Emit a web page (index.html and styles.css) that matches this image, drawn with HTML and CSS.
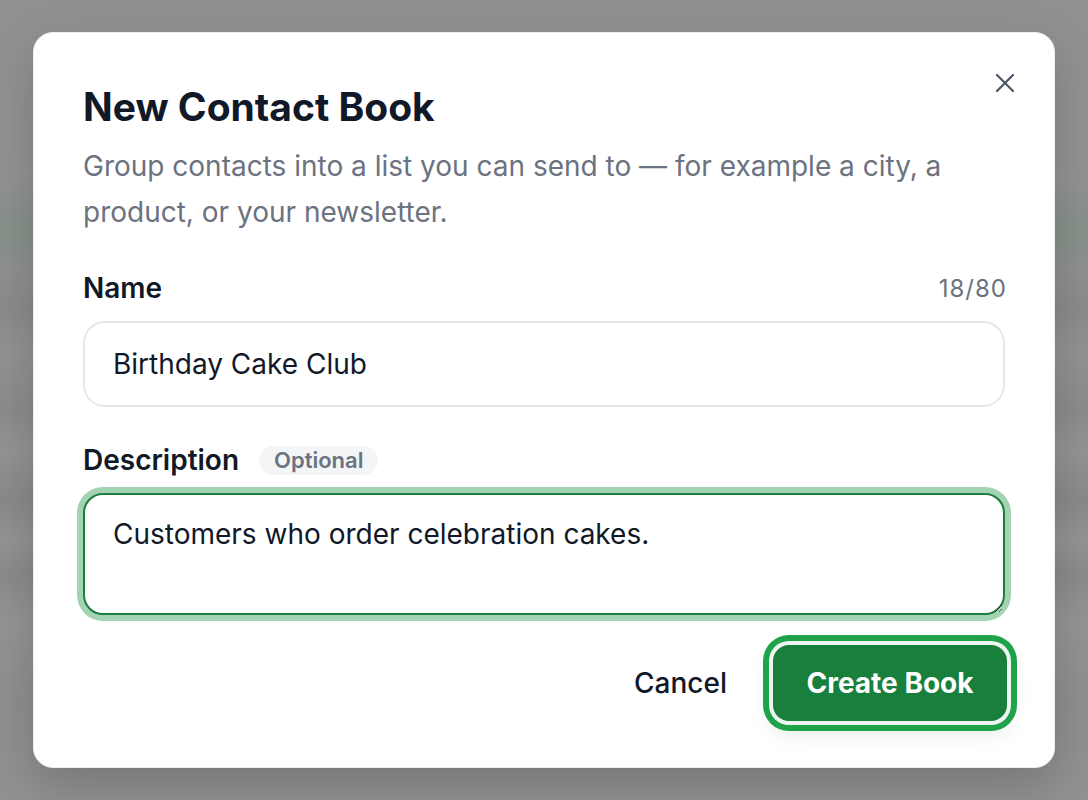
FILE: index.html
```html
<!DOCTYPE html>
<html lang="en">
<head>
<meta charset="utf-8">
<title>New Contact Book</title>
<link rel="stylesheet" href="styles.css">
</head>
<body>
<div class="backdrop">
  <div class="dialog">
    <button class="close" aria-label="Close">
      <svg width="22" height="22" viewBox="0 0 22 22" fill="none" stroke="currentColor" stroke-width="2.2" stroke-linecap="round"><path d="M3 3L19 19M19 3L3 19"/></svg>
    </button>
    <h1 class="title">New Contact Book</h1>
    <p class="desc">Group contacts into a list you can send to — for example a city, a product, or your newsletter.</p>

    <div class="field">
      <div class="label-row">
        <label class="label">Name</label>
        <span class="counter">18/80</span>
      </div>
      <input class="input" type="text" value="Birthday Cake Club">
    </div>

    <div class="field">
      <div class="label-row">
        <label class="label">Description</label>
        <span class="pill">Optional</span>
      </div>
      <textarea class="textarea">Customers who order celebration cakes.</textarea>
    </div>

    <div class="actions">
      <button class="btn-cancel">Cancel</button>
      <button class="btn-primary">Create Book</button>
    </div>
  </div>
</div>
</body>
</html>
```

FILE: styles.css
```css
* { box-sizing: border-box; }
html, body { margin: 0; padding: 0; }
body {
  width: 1088px;
  height: 800px;
  overflow: hidden;
  font-family: Inter, "Noto Sans", sans-serif;
  background:
    linear-gradient(180deg,
      #8f908f 0px, #929392 180px, #86918a 230px, #8f918f 270px,
      #8a8b8a 310px, #929392 350px, #8b8c8b 410px, #939493 450px,
      #898a89 500px, #939493 540px, #8a8b8a 575px, #949594 620px,
      #8e8f8e 700px, #919291 800px);
}
.backdrop {
  width: 1088px;
  height: 800px;
  display: flex;
  align-items: center;
  justify-content: center;
}
.dialog {
  position: relative;
  width: 1022px;
  height: 736px;
  background: #fff;
  border-radius: 20px;
  border: 1px solid #eceeee;
  box-shadow: 0 20px 50px rgba(0,0,0,0.18);
  padding: 51px 49px 0 49px;
  display: flex;
  flex-direction: column;
}
.close {
  position: absolute;
  top: 39px;
  right: 38px;
  width: 22px;
  height: 22px;
  padding: 0;
  border: 0;
  background: none;
  color: #4b5563;
  display: flex;
}
.title {
  margin: 0;
  font-size: 39px;
  line-height: 46px;
  font-weight: 700;
  color: #111827;
}
.desc {
  margin: 13px 0 0 0;
  font-size: 28px;
  line-height: 46px;
  color: #6b7280;
}
.field { display: flex; flex-direction: column; }
.label-row {
  display: flex;
  align-items: center;
  height: 34px;
}
.field:nth-of-type(1) { margin-top: 36px; }
.field:nth-of-type(2) { margin-top: 36px; }
.label {
  font-size: 28px;
  font-weight: 600;
  color: #111827;
}
.counter {
  margin-left: auto;
  font-size: 24px;
  color: #6b7280;
  letter-spacing: 1px;
  margin-right: -2px;
}
.pill {
  margin-left: 20px;
  height: 29px;
  padding: 0 15px;
  border-radius: 15px;
  background: #f4f5f7;
  color: #6b7280;
  font-size: 22px;
  font-weight: 600;
  display: flex;
  align-items: center;
}
.input {
  margin-top: 16px;
  width: 100%;
  height: 86px;
  border: 2px solid #e5e7eb;
  border-radius: 22px;
  padding: 0 28px;
  font-family: inherit;
  font-size: 28px;
  color: #111827;
  background: #fff;
  outline: none;
}
.textarea {
  margin-top: 16px;
  width: 100%;
  height: 122px;
  border: 2px solid #1a7f3c;
  border-radius: 20px;
  padding: 22px 28px;
  font-family: inherit;
  font-size: 28px;
  line-height: 34px;
  color: #111827;
  background: #fff;
  outline: none;
  box-shadow: 0 0 0 6px #a4d3b4;
  resize: vertical;
}
.actions {
  margin-top: 30px;
  display: flex;
  justify-content: flex-end;
  align-items: center;
  gap: 46px;
  margin-right: -2px;
}
.btn-cancel {
  border: 0;
  background: none;
  font-family: inherit;
  font-size: 28px;
  font-weight: 500;
  color: #111827;
  padding: 0;
}
.btn-primary {
  width: 234px;
  height: 76px;
  border: 0;
  border-radius: 16px;
  background: #18803c;
  color: #fff;
  font-family: inherit;
  font-size: 28px;
  font-weight: 700;
  box-shadow: 0 0 0 4px #eef5f0, 0 0 0 10px #1ea34b, 0 10px 24px rgba(0,0,0,0.12);
}
```
